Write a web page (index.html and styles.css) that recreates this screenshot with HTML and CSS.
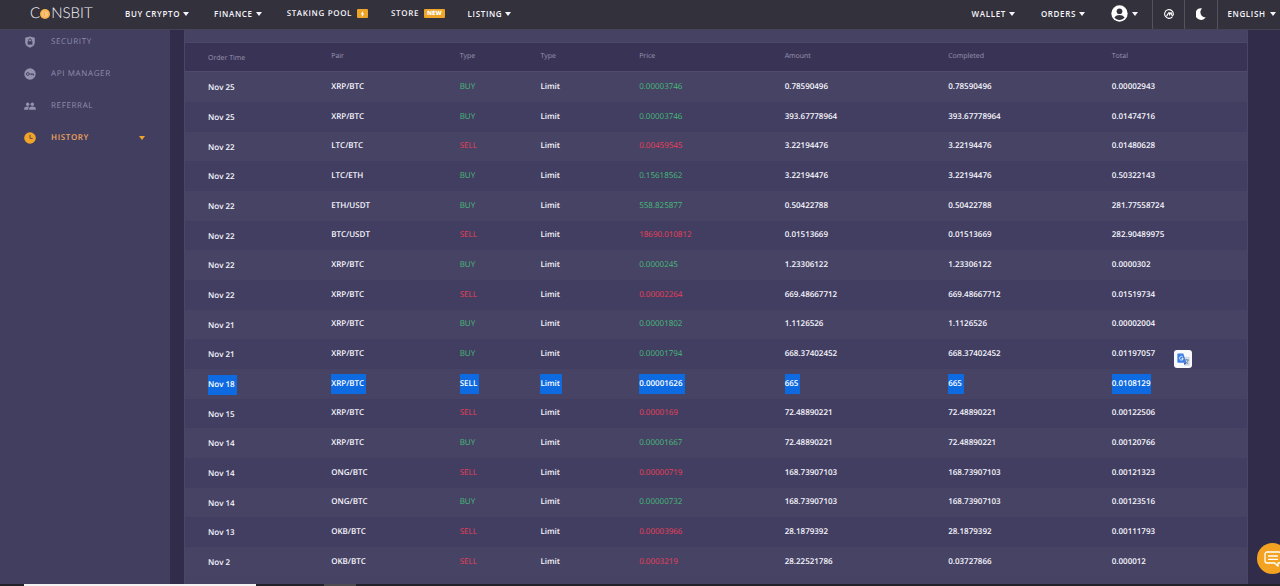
FILE: index.html
```html
<!DOCTYPE html>
<html lang="en">
<head>
<meta charset="utf-8">
<title>Consbit – Order history</title>
<link rel="stylesheet" href="styles.css">
</head>
<body>
<header class="topbar">
  <a class="logo" href="#" aria-label="Consbit"><span>C</span><svg class="coin" viewBox="0 0 10 10" aria-hidden="true"><circle cx="5" cy="5" r="5" fill="#f9b04e"/><circle cx="5" cy="5" r="3" fill="#fbc57c"/><path d="M4.3 3.2v3.6" stroke="#f3953a" stroke-width=".8"/></svg><span>NSBIT</span></a>
  <nav class="menu">
    <button class="nav-item">BUY CRYPTO<i class="caret"></i></button>
    <button class="nav-item">FINANCE<i class="caret"></i></button>
    <a class="nav-item" href="#">STAKING POOL<span class="badge bolt"><svg viewBox="0 0 6 8" aria-hidden="true"><path d="M3.6 0L.6 4.3h1.8L2 8l3.4-4.7H3.6z" fill="#fff"/></svg></span></a>
    <a class="nav-item" href="#">STORE<span class="badge">NEW</span></a>
    <button class="nav-item">LISTING<i class="caret"></i></button>
  </nav>
  <div class="account">
    <button class="nav-item wallet">WALLET<i class="caret"></i></button>
    <button class="nav-item orders">ORDERS<i class="caret"></i></button>
    <button class="nav-item user" aria-label="Profile"><svg viewBox="0 0 24 24" aria-hidden="true"><circle cx="12" cy="12" r="11.5" fill="#fff"/><circle cx="12" cy="8.8" r="4" fill="#33313c"/><path d="M4.8 17.6c1.6-2.500 4.400-3.600 7.200-3.600s5.600 1.100 7.200 3.600c-1.700 2.200-4.300 3.600-7.200 3.600s-5.500-1.400-7.200-3.600z" fill="#33313c"/></svg><i class="caret"></i></button>
    <button class="cell cmc" aria-label="Market cap"><svg viewBox="0 0 20 20" fill="none" stroke="#fff" stroke-width="2.200" stroke-linecap="round" stroke-linejoin="round" aria-hidden="true"><path d="M16.500 15.800A8.700 8.700 0 1 1 18.700 10v1.200c0 2.400-3.200 2.600-3.400 0V9c0-2-1.500-2.200-2.300-.6l-1.900 3.800V8.800c0-1.900-1.400-2-2.200-.5l-3.400 5.400"/></svg></button>
    <button class="cell moon" aria-label="Dark theme"><svg viewBox="0 0 10 12" aria-hidden="true"><path d="M6 .4A5.700 5.700 0 1 0 9.800 9.300 5.200 5.200 0 0 1 6 .4z" fill="#fff"/></svg></button>
    <button class="cell lang">ENGLISH<i class="caret"></i></button>
  </div>
</header>

<div class="page">
  <nav class="sidebar">
    <a class="side-item" href="#"><svg viewBox="0 0 12 12" aria-hidden="true"><path d="M6 .4l4.800 1.400v4.800c0 2.500-2 4.200-4.800 5.200-2.800-1-4.800-2.700-4.800-5.200V1.800z" fill="#9692ad"/><path d="M4.600 5.400V4.200a1.400 1.400 0 0 1 2.800 0v1.200" fill="none" stroke="#403d60" stroke-width=".9"/><rect x="3.600" y="5.200" width="4.800" height="3.400" fill="#403d60"/></svg>SECURITY</a>
    <a class="side-item" href="#"><svg viewBox="0 0 12 12" aria-hidden="true"><circle cx="6" cy="6" r="5.700" fill="#9692ad"/><g fill="none" stroke="#403d60" stroke-width=".9"><circle cx="3.800" cy="6" r="1.400"/><path d="M5.200 6h4.600M9.400 6v1.600M7.800 6v1.200"/></g></svg>API MANAGER</a>
    <a class="side-item" href="#"><svg viewBox="0 0 12 12" fill="#9692ad" aria-hidden="true"><circle cx="3.700" cy="4.200" r="1.700"/><circle cx="8.300" cy="4.200" r="1.700"/><path d="M.2 9.800V8.600c0-1.400 1.500-2.200 3.200-2.200.7 0 1.300.1 1.800.4-.6.500-.9 1.100-.9 1.800v1.200zM5.100 9.800V8.600c0-1.400 1.400-2.200 3.300-2.200s3.400.8 3.400 2.200v1.200z"/></svg>REFERRAL</a>
    <a class="side-item active" href="#"><svg viewBox="0 0 12 12" aria-hidden="true"><circle cx="6" cy="6" r="5.800" fill="#f0a429"/><path d="M6 2.800v3.600h2.700" fill="none" stroke="#5c4a48" stroke-width="1"/></svg>HISTORY<i class="caret"></i></a>
  </nav>

  <main class="panel">
    <table class="orders-table">
      <colgroup><col class="c-time"><col class="c-pair"><col class="c-side"><col class="c-type"><col class="c-price"><col class="c-amount"><col class="c-done"><col class="c-total"></colgroup>
      <thead>
        <tr><th>Order Time</th><th>Pair</th><th>Type</th><th>Type</th><th>Price</th><th>Amount</th><th>Completed</th><th>Total</th></tr>
      </thead>
      <tbody>
        <tr class="buy"><td>Nov 25</td><td>XRP/BTC</td><td>BUY</td><td>Limit</td><td>0.00003746</td><td>0.78590496</td><td>0.78590496</td><td>0.00002943</td></tr>
        <tr class="buy"><td>Nov 25</td><td>XRP/BTC</td><td>BUY</td><td>Limit</td><td>0.00003746</td><td>393.67778964</td><td>393.67778964</td><td>0.01474716</td></tr>
        <tr class="sell"><td>Nov 22</td><td>LTC/BTC</td><td>SELL</td><td>Limit</td><td>0.00459545</td><td>3.22194476</td><td>3.22194476</td><td>0.01480628</td></tr>
        <tr class="buy"><td>Nov 22</td><td>LTC/ETH</td><td>BUY</td><td>Limit</td><td>0.15618562</td><td>3.22194476</td><td>3.22194476</td><td>0.50322143</td></tr>
        <tr class="buy"><td>Nov 22</td><td>ETH/USDT</td><td>BUY</td><td>Limit</td><td>558.825877</td><td>0.50422788</td><td>0.50422788</td><td>281.77558724</td></tr>
        <tr class="sell"><td>Nov 22</td><td>BTC/USDT</td><td>SELL</td><td>Limit</td><td>18690.010812</td><td>0.01513669</td><td>0.01513669</td><td>282.90489975</td></tr>
        <tr class="buy"><td>Nov 22</td><td>XRP/BTC</td><td>BUY</td><td>Limit</td><td>0.0000245</td><td>1.23306122</td><td>1.23306122</td><td>0.0000302</td></tr>
        <tr class="sell"><td>Nov 22</td><td>XRP/BTC</td><td>SELL</td><td>Limit</td><td>0.00002264</td><td>669.48667712</td><td>669.48667712</td><td>0.01519734</td></tr>
        <tr class="buy"><td>Nov 21</td><td>XRP/BTC</td><td>BUY</td><td>Limit</td><td>0.00001802</td><td>1.1126526</td><td>1.1126526</td><td>0.00002004</td></tr>
        <tr class="buy"><td>Nov 21</td><td>XRP/BTC</td><td>BUY</td><td>Limit</td><td>0.00001794</td><td>668.37402452</td><td>668.37402452</td><td>0.01197057</td></tr>
        <tr class="selected"><td><mark>Nov 18</mark></td><td><mark>XRP/BTC</mark></td><td><mark>SELL</mark></td><td><mark>Limit</mark></td><td><mark>0.00001626</mark></td><td><mark>665</mark></td><td><mark>665</mark></td><td><mark class="last">0.0108129</mark></td></tr>
        <tr class="sell"><td>Nov 15</td><td>XRP/BTC</td><td>SELL</td><td>Limit</td><td>0.0000169</td><td>72.48890221</td><td>72.48890221</td><td>0.00122506</td></tr>
        <tr class="buy"><td>Nov 14</td><td>XRP/BTC</td><td>BUY</td><td>Limit</td><td>0.00001667</td><td>72.48890221</td><td>72.48890221</td><td>0.00120766</td></tr>
        <tr class="sell"><td>Nov 14</td><td>ONG/BTC</td><td>SELL</td><td>Limit</td><td>0.00000719</td><td>168.73907103</td><td>168.73907103</td><td>0.00121323</td></tr>
        <tr class="buy"><td>Nov 14</td><td>ONG/BTC</td><td>BUY</td><td>Limit</td><td>0.00000732</td><td>168.73907103</td><td>168.73907103</td><td>0.00123516</td></tr>
        <tr class="sell"><td>Nov 13</td><td>OKB/BTC</td><td>SELL</td><td>Limit</td><td>0.00003966</td><td>28.1879392</td><td>28.1879392</td><td>0.00111793</td></tr>
        <tr class="sell"><td>Nov 2</td><td>OKB/BTC</td><td>SELL</td><td>Limit</td><td>0.0003219</td><td>28.22521786</td><td>0.03727866</td><td>0.000012</td></tr>
      </tbody>
    </table>
    <button class="translate" aria-label="Translate selection"><svg viewBox="0 0 14 14" aria-hidden="true"><path d="M6 4h7a.7.7 0 0 1 .7.7v8.300a.7.7 0 0 1-.7.7H8.500z" fill="#d5dbe3"/><path d="M8 7.500h4.800M10.300 6.500v1M12 7.500c-.3 1.900-1.700 3.300-3 4M9 8.800c.7 1.400 1.800 2.200 3 2.700" fill="none" stroke="#67788c" stroke-width=".8"/><path d="M1 .5h5.800l3.200 10H1.200a.8.8 0 0 1-.8-.8V1.200A.7.7 0 0 1 1 .5z" fill="#3f7fe6"/><path d="M7.300 10.500H10l-1.800 2.700z" fill="#2958b5"/><path d="M6.300 4.400A2 2 0 1 0 6.700 6H4.900" fill="none" stroke="#fff" stroke-width=".9"/></svg></button>
  </main>
</div>

<button class="chat" aria-label="Open chat"><svg viewBox="0 0 18 18" fill="none" stroke="#fff" stroke-width="1.300" stroke-linecap="round" stroke-linejoin="round" aria-hidden="true"><path d="M3.200 2h11.600A2.200 2.200 0 0 1 17 4.200v6.600a2.200 2.200 0 0 1-2.200 2.200H14v3.200L10.800 13H3.200A2.200 2.200 0 0 1 1 10.800V4.200A2.200 2.200 0 0 1 3.200 2zM4.500 6h9M4.500 9.300h9"/></svg></button>
<div class="taskbar"><span class="task-search"></span><span class="task-app"></span></div>
</body>
</html>
```
FILE: styles.css
```css
* { box-sizing: border-box; }

body {
  margin: 0;
  height: 100vh;
  display: flex;
  flex-direction: column;
  overflow: hidden;
  background: #302c4a;
  color: #f6f5fb;
  font: 500 8px/12px "Open Sans", "Noto Sans", sans-serif;
  text-rendering: geometricPrecision;
}

button {
  border: 0;
  padding: 0;
  background: none;
  color: inherit;
  font: inherit;
  cursor: pointer;
}

a { color: inherit; text-decoration: none; }

.caret {
  display: inline-block;
  border: 3px solid transparent;
  border-top: 4px solid currentColor;
  border-bottom: 0;
}

/* Top bar */
.topbar {
  flex: none;
  height: 30px;
  padding-bottom: 2px;
  display: flex;
  align-items: stretch;
  background: #33313c;
  border-bottom: 1px solid #454255;
  font-weight: 600;
  letter-spacing: 0.08em;
}

.logo {
  display: flex;
  align-items: center;
  margin-left: 30px;
  width: 95px;
  font: 300 15px/15px Lato, sans-serif;
  letter-spacing: 0;
}

.coin { width: 10px; height: 10px; margin-right: 1px; }

.menu { display: flex; gap: 25px; }

.nav-item {
  display: flex;
  align-items: center;
  letter-spacing: inherit;
  gap: 3px;
}

.badge {
  display: flex;
  align-items: center;
  justify-content: center;
  height: 9px;
  margin: 0 -2px 0 2px;
  padding: 0 3px;
  border-radius: 1px;
  background: #eda428;
  color: #fff;
  font-size: 6px;
  line-height: 9px;
  font-weight: 800;
  letter-spacing: 0;
}

.bolt svg { width: 5px; height: 6px; }

.account { display: flex; margin-left: auto; margin-bottom: -2px; }
.account > * { padding-bottom: 2px; }
.wallet, .orders { margin-right: 26px; }
.user { margin-right: 14px; gap: 4px; }
.user svg { width: 17px; height: 17px; }

.cell {
  display: flex;
  align-items: center;
  justify-content: center;
  width: 32px;
  border-left: 1px solid #55525f;
  letter-spacing: inherit;
}

.cmc svg { width: 10px; height: 10px; }
.moon { width: 33px; }
.moon svg { width: 10px; height: 12px; }
.lang { width: 63px; gap: 4px; padding-left: 5px; }

/* Page body */
.page { flex: 1; min-height: 0; display: flex; overflow: hidden; }

.sidebar {
  flex: none;
  width: 170px;
  padding: 0 25px;
  background: #413e60;
  color: #918dab;
  letter-spacing: 0.08em;
}

.side-item {
  display: flex;
  align-items: center;
  gap: 15px;
  height: 32px;
}

.side-item:first-child { height: 28px; padding-bottom: 4px; }
.side-item svg { width: 12px; height: 12px; margin-left: -1px; }
.side-item.active { color: #f0a45a; font-weight: 600; }
.side-item .caret { margin-left: auto; color: #f0a429; }

.panel {
  position: relative;
  flex: 1;
  margin: 0 32px 0 14px;
  padding-top: 12px;
  background: #454264;
  border-left: 1px solid #494669;
  border-right: 1px solid #494669;
}

.orders-table {
  width: 100%;
  table-layout: fixed;
  border-collapse: collapse;
}

.c-time { width: 11.6%; }
.c-pair { width: 12.1%; }
.c-side { width: 7.6%; }
.c-type { width: 9.3%; }
.c-price { width: 13.7%; }
.c-amount { width: 15.4%; }
.c-done { width: 15.4%; }
.c-total { width: 14.9%; }

th, td {
  padding: 0 0 0 23px;
  text-align: left;
  vertical-align: middle;
  white-space: nowrap;
}

th:first-child, td:first-child { padding-top: 3px; }

th {
  height: 29px;
  background: #393456;
  border-top: 1px solid #4c486b;
  border-bottom: 1px solid #504c70;
  color: #9995af;
  font-size: 7px;
  font-weight: 400;
}

td { font-weight: 600; }

tbody tr { height: 30px; background: #413e61; }
tbody tr:nth-child(3n) { height: 29px; }
tbody tr:nth-child(odd) { background: #464365; }

.buy td:nth-child(3), .buy td:nth-child(5) { color: #46bd78; font-weight: 500; }
.sell td:nth-child(3), .sell td:nth-child(5) { color: #ee3e58; font-weight: 500; }

mark {
  display: inline-block;
  padding-right: 2px;
  background: #0e6ae0;
  color: #fff;
  line-height: 20px;
}

mark.last { padding-right: 0; }

/* Floating controls */
.translate {
  position: absolute;
  top: 320px;
  right: 55px;
  width: 18px;
  height: 18px;
  display: flex;
  align-items: center;
  justify-content: center;
  border-radius: 3px;
  background: #f8f9fb;
}

.translate svg { width: 13px; height: 13px; }

.chat {
  position: fixed;
  right: -8px;
  bottom: 12px;
  width: 31px;
  height: 31px;
  display: flex;
  align-items: center;
  justify-content: center;
  border-radius: 50%;
  background: #f3a321;
}

.chat svg { width: 18px; height: 18px; }

.taskbar {
  flex: none;
  display: flex;
  height: 2px;
  padding-left: 24px;
  background: #22222a;
}

.task-search { width: 232px; background: #f2f2f2; }
.task-app { width: 32px; margin-left: 68px; background: #4b4b50; }
```
